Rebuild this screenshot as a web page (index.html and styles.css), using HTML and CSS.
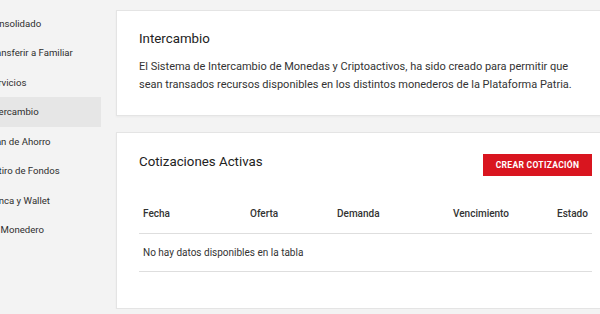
FILE: index.html
```html
<!DOCTYPE html>
<html lang="es">
  <head>
    <meta charset="UTF-8" />
    <meta name="viewport" content="width=device-width, initial-scale=1.0" />
    <title>Intercambio</title>
    <link rel="stylesheet" href="styles.css">
  </head>
  <body>
    <div class="layout">
      <nav class="sidebar">
        <ul class="side-links">
          <li>Consolidado</li>
          <li>Transferir a Familiar</li>
          <li>Servicios</li>
          <li class="active">Intercambio</li>
          <li>Plan de Ahorro</li>
          <li>Retiro de Fondos</li>
          <li>Banca y Wallet</li>
          <li>Mi Monedero</li>
        </ul>
      </nav>

      <main class="content">
        <section class="card intro">
          <h2 class="card-title">Intercambio</h2>
          <p class="card-text">
            El Sistema de Intercambio de Monedas y Criptoactivos, ha sido creado para permitir que
            sean transados recursos disponibles en los distintos monederos de la Plataforma Patria.
          </p>
        </section>

        <section class="card quotes">
          <div class="card-head">
            <h2 class="card-title">Cotizaciones Activas</h2>
            <a class="btn-red" href="#">CREAR COTIZACIÓN</a>
          </div>

          <table class="quotes-table">
            <colgroup>
              <col class="col-fecha" />
              <col class="col-oferta" />
              <col class="col-demanda" />
              <col class="col-venc" />
              <col class="col-estado" />
            </colgroup>
            <thead>
              <tr>
                <th>Fecha</th>
                <th>Oferta</th>
                <th>Demanda</th>
                <th>Vencimiento</th>
                <th>Estado</th>
              </tr>
            </thead>
            <tbody>
              <tr>
                <td colspan="5">No hay datos disponibles en la tabla</td>
              </tr>
            </tbody>
          </table>
        </section>
      </main>
    </div>
  </body>
</html>
```

FILE: styles.css
```css
/* Global */
* {
  margin: 0;
  padding: 0;
  box-sizing: border-box;
  font-family: Roboto, "Liberation Sans", sans-serif;
}

body {
  background-color: #f3f3f3;
  color: #2b2b2b;
  overflow: hidden;
}

.layout {
  display: flex;
  align-items: flex-start;
}

/* Sidebar */
.sidebar {
  width: 101px;
  flex-shrink: 0;
  padding-top: 8.5px;
  overflow: hidden;
}

.side-links {
  list-style: none;
}

.side-links li {
  height: 29.5px;
  line-height: 29.5px;
  font-size: 9.6px;
  color: #2e2e2e;
  white-space: nowrap;
  overflow: hidden;
  text-indent: -12.5px;
}

.side-links li.active {
  background-color: #e6e6e6;
}

/* Cards */
.content {
  display: flex;
  flex-direction: column;
  gap: 16px;
  width: 499px;
  flex-shrink: 0;
  margin-left: 15px;
  padding-top: 10px;
}

.card {
  background: #fff;
  border: 1px solid #e4e4e4;
  box-shadow: 0 1px 2px rgba(0, 0, 0, 0.04);
  padding: 0 22px 0 22px;
}

.card-title {
  font-size: 13.3px;
  font-weight: 400;
  line-height: 16px;
  color: #222;
}

.intro {
  height: 106px;
  padding-top: 20px;
}

.card-text {
  margin-top: 10.5px;
  font-size: 11px;
  line-height: 18.5px;
  color: #333;
}

.quotes {
  height: 177px;
  padding-top: 21px;
}

.card-head {
  display: flex;
  justify-content: space-between;
  align-items: flex-start;
}

.btn-red {
  display: block;
  width: 109px;
  height: 22px;
  line-height: 22px;
  text-align: center;
  background-color: #d9151f;
  color: #fff;
  font-size: 8.5px;
  font-weight: 700;
  letter-spacing: 0.3px;
  text-decoration: none;
}

/* Table */
.quotes-table {
  width: 100%;
  margin-top: 19px;
  border-collapse: collapse;
  table-layout: fixed;
}

.col-fecha { width: 107px; }
.col-oferta { width: 87px; }
.col-demanda { width: 116px; }
.col-venc { width: 104px; }
.col-estado { width: 39px; }

.quotes-table th,
.quotes-table td {
  height: 38px;
  padding: 0 4px;
  text-align: left;
  font-size: 10px;
  color: #333;
  border-bottom: 1px solid #dedede;
  white-space: nowrap;
}

.quotes-table th {
  font-weight: 500;
}
```
